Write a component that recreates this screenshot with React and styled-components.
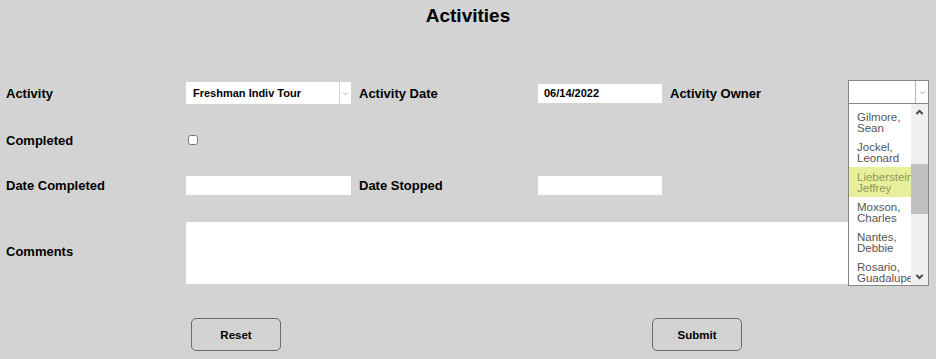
import React from 'react';
import styled, { createGlobalStyle } from 'styled-components';

const GlobalStyle = createGlobalStyle`
  html, body {
    margin: 0;
    padding: 0;
    background: #d3d3d3;
    font-family: "Liberation Sans", Arial, sans-serif;
    color: #000;
  }
`;

const Page = styled.div`
  width: 936px;
  height: 359px;
  overflow: hidden;
  background: #d3d3d3;
`;

const Title = styled.h1`
  margin: 4px 0 0;
  text-align: center;
  font-size: 19px;
  line-height: 24px;
  font-weight: bold;
`;

const Form = styled.div`
  display: grid;
  grid-template-columns: 180px 165px 187px 124px 186px 81px;
  grid-template-rows: 24px 24px 20px 66px;
  row-gap: 23px;
  align-items: center;
  margin-top: 53px;
  padding-left: 6px;
`;

const Label = styled.div`
  font-size: 13px;
  font-weight: bold;
  padding-left: ${(p) => (p.$inset ? '8px' : '0')};
  white-space: nowrap;
`;

const SelectBox = styled.div`
  display: flex;
  height: 22px;
  background: #fff;
`;

const SelectValue = styled.div`
  flex: 1;
  display: flex;
  align-items: center;
  padding-left: 7px;
  font-size: 11px;
  font-weight: bold;
  white-space: nowrap;
  overflow: hidden;
`;

const ArrowCell = styled.div`
  width: 11px;
  display: flex;
  align-items: center;
  justify-content: center;
  border-left: 1px solid #d6d6d6;
`;

const TextInput = styled.div`
  height: ${(p) => p.$h || 19}px;
  background: #fff;
  display: flex;
  align-items: center;
  padding-left: 6px;
  font-size: 11px;
  font-weight: bold;
  box-sizing: border-box;
`;

const Check = styled.input`
  width: 10px;
  height: 10px;
  margin: 0 0 0 2px;
`;

const Comments = styled.div`
  grid-column: 2 / span 5;
  align-self: end;
  width: 700px;
  height: 62px;
  background: #fff;
`;

const OwnerWrap = styled.div`
  position: relative;
  align-self: start;
  margin-top: -1px;
`;

const OwnerHead = styled.div`
  display: flex;
  height: 24px;
  box-sizing: border-box;
  border: 1px solid #858585;
  background: #fff;
`;

const OwnerArrow = styled(ArrowCell)`
  width: 12px;
  border-left: 1px solid #b9b9b9;
`;

const OwnerList = styled.div`
  position: absolute;
  top: 24px;
  left: 0;
  width: 81px;
  height: 182px;
  box-sizing: border-box;
  border: 1px solid #858585;
  border-top: none;
  background: #fff;
  display: flex;
  z-index: 2;
`;

const Items = styled.div`
  flex: 1;
  overflow: hidden;
  padding-top: 3px;
`;

const Item = styled.div`
  height: 30px;
  box-sizing: border-box;
  padding: 5px 0 0 8px;
  font-size: 11.5px;
  line-height: 11px;
  color: ${(p) => (p.$active ? '#8e9b58' : '#555')};
  background: ${(p) => (p.$active ? '#e8ef9b' : '#fff')};
  white-space: nowrap;
`;

const Scrollbar = styled.div`
  width: 17px;
  background: #f0f0f0;
  display: flex;
  flex-direction: column;
  align-items: center;
`;

const ScrollBtn = styled.div`
  height: 17px;
  display: flex;
  align-items: center;
  justify-content: center;
`;

const Track = styled.div`
  flex: 1;
  width: 100%;
  padding-top: 43px;
`;

const Thumb = styled.div`
  height: 50px;
  background: #c1c1c1;
`;

const ButtonRow = styled.div`
  display: flex;
  gap: 371px;
  padding-left: 191px;
  margin-top: 34px;
`;

const Button = styled.button`
  width: 90px;
  height: 33px;
  background: #d3d3d3;
  border: 1px solid #6b6b6b;
  border-radius: 5px;
  font-family: "Liberation Sans", Arial, sans-serif;
  font-size: 11.5px;
  font-weight: bold;
  color: #000;
`;

const Chevron = ({ up, color = '#b0b0b0', w = 1, size = 7 }) => (
  <svg width={size} height={size * 0.7} viewBox="0 0 7 5">
    <path
      d={up ? 'M1 4 L3.5 1.5 L6 4' : 'M1 1.5 L3.5 4 L6 1.5'}
      fill="none"
      stroke={color}
      strokeWidth={w}
    />
  </svg>
);

const owners = [
  ['Gilmore,', 'Sean'],
  ['Jockel,', 'Leonard'],
  ['Lieberstein,', 'Jeffrey'],
  ['Moxson,', 'Charles'],
  ['Nantes,', 'Debbie'],
  ['Rosario,', 'Guadalupe'],
];

export default function App() {
  return (
    <Page>
      <GlobalStyle />
      <Title>Activities</Title>
      <Form>
        <Label>Activity</Label>
        <SelectBox>
          <SelectValue>Freshman Indiv Tour</SelectValue>
          <ArrowCell>
            <Chevron />
          </ArrowCell>
        </SelectBox>
        <Label $inset>Activity Date</Label>
        <TextInput>06/14/2022</TextInput>
        <Label $inset>Activity Owner</Label>
        <OwnerWrap>
          <OwnerHead>
            <div style={{ flex: 1 }} />
            <OwnerArrow>
              <Chevron color="#a0a0a0" />
            </OwnerArrow>
          </OwnerHead>
          <OwnerList>
            <Items>
              {owners.map(([last, first], i) => (
                <Item key={last} $active={i === 2}>
                  {last}
                  <br />
                  {first}
                </Item>
              ))}
            </Items>
            <Scrollbar>
              <ScrollBtn>
                <Chevron up color="#4a4a4a" w={1.6} size={9} />
              </ScrollBtn>
              <Track>
                <Thumb />
              </Track>
              <ScrollBtn>
                <Chevron color="#4a4a4a" w={1.6} size={9} />
              </ScrollBtn>
            </Scrollbar>
          </OwnerList>
        </OwnerWrap>

        <Label>Completed</Label>
        <div>
          <Check type="checkbox" />
        </div>
        <div />
        <div />
        <div />
        <div />

        <Label>Date Completed</Label>
        <TextInput />
        <Label $inset>Date Stopped</Label>
        <TextInput />
        <div />
        <div />

        <Label>Comments</Label>
        <Comments />
      </Form>
      <ButtonRow>
        <Button>Reset</Button>
        <Button>Submit</Button>
      </ButtonRow>
    </Page>
  );
}
